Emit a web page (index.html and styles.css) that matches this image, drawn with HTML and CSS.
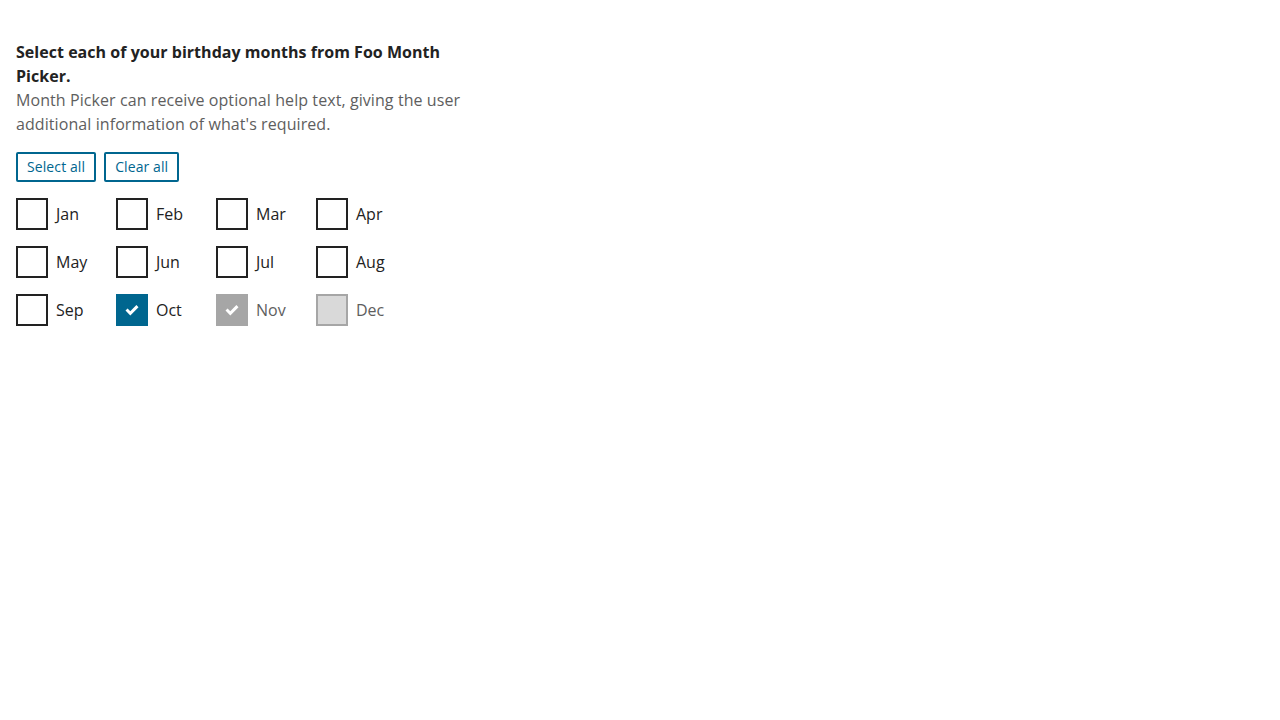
FILE: index.html
```html
<!DOCTYPE html>
<html lang="en">
<head>
<meta charset="utf-8">
<title>Month Picker</title>
<link rel="stylesheet" href="styles.css">
</head>
<body>
<div class="picker">
  <div class="legend">Select each of your birthday months from Foo Month Picker.</div>
  <div class="help">Month Picker can receive optional help text, giving the user additional information of what's required.</div>
  <div class="actions">
    <button class="btn">Select all</button>
    <button class="btn">Clear all</button>
  </div>
  <div class="grid">
    <label class="month"><span class="box"></span><span class="lbl">Jan</span></label>
    <label class="month"><span class="box"></span><span class="lbl">Feb</span></label>
    <label class="month"><span class="box"></span><span class="lbl">Mar</span></label>
    <label class="month"><span class="box"></span><span class="lbl">Apr</span></label>
    <label class="month"><span class="box"></span><span class="lbl">May</span></label>
    <label class="month"><span class="box"></span><span class="lbl">Jun</span></label>
    <label class="month"><span class="box"></span><span class="lbl">Jul</span></label>
    <label class="month"><span class="box"></span><span class="lbl">Aug</span></label>
    <label class="month"><span class="box"></span><span class="lbl">Sep</span></label>
    <label class="month checked"><span class="box"><svg viewBox="0 0 14 11" width="14" height="11"><path d="M0.5 5.6 L2.6 3.5 L5.3 6.2 L11.4 0.1 L13.5 2.2 L5.3 10.4 Z" fill="#fff"/></svg></span><span class="lbl">Oct</span></label>
    <label class="month checked disabled"><span class="box"><svg viewBox="0 0 14 11" width="14" height="11"><path d="M0.5 5.6 L2.6 3.5 L5.3 6.2 L11.4 0.1 L13.5 2.2 L5.3 10.4 Z" fill="#fff"/></svg></span><span class="lbl">Nov</span></label>
    <label class="month disabled"><span class="box"></span><span class="lbl">Dec</span></label>
  </div>
</div>
</body>
</html>
```

FILE: styles.css
```css
html, body {
  margin: 0;
  padding: 0;
  background: #fff;
}
body {
  font-family: "Open Sans", "Liberation Sans", sans-serif;
  font-size: 16px;
  line-height: 24px;
  color: #222;
}
.picker {
  padding: 40px 16px 0 16px;
  width: 462px;
}
.legend {
  font-weight: 700;
  color: #222;
  letter-spacing: 0.03px;
}
.help {
  color: #5e5e5e;
  letter-spacing: 0.08px;
}
.actions {
  display: flex;
  gap: 8px;
  margin-top: 16px;
}
.btn {
  font-family: "Open Sans", "Liberation Sans", sans-serif;
  font-size: 14px;
  line-height: 18px;
  letter-spacing: 0.1px;
  color: #00668f;
  background: #fff;
  border: 2px solid #00668f;
  border-radius: 2px;
  padding: 4px 9px;
  height: 30px;
  margin: 0;
  cursor: pointer;
}
.grid {
  display: grid;
  grid-template-columns: repeat(4, 100px);
  row-gap: 16px;
  margin-top: 16px;
}
.month {
  display: flex;
  align-items: center;
  gap: 8px;
  height: 32px;
}
.box {
  box-sizing: border-box;
  width: 32px;
  height: 32px;
  border: 2px solid #222;
  background: #fff;
  display: flex;
  align-items: center;
  justify-content: center;
  flex: none;
}
.box svg {
  display: block;
  margin-top: 1px;
}
.lbl {
  color: #222;
}
.checked .box {
  background: #00668f;
  border-color: #00668f;
}
.disabled .box {
  background: #d9d9d9;
  border-color: #a6a6a6;
}
.checked.disabled .box {
  background: #a6a6a6;
  border-color: #a6a6a6;
}
.disabled .lbl {
  color: #5e5e5e;
}
```
